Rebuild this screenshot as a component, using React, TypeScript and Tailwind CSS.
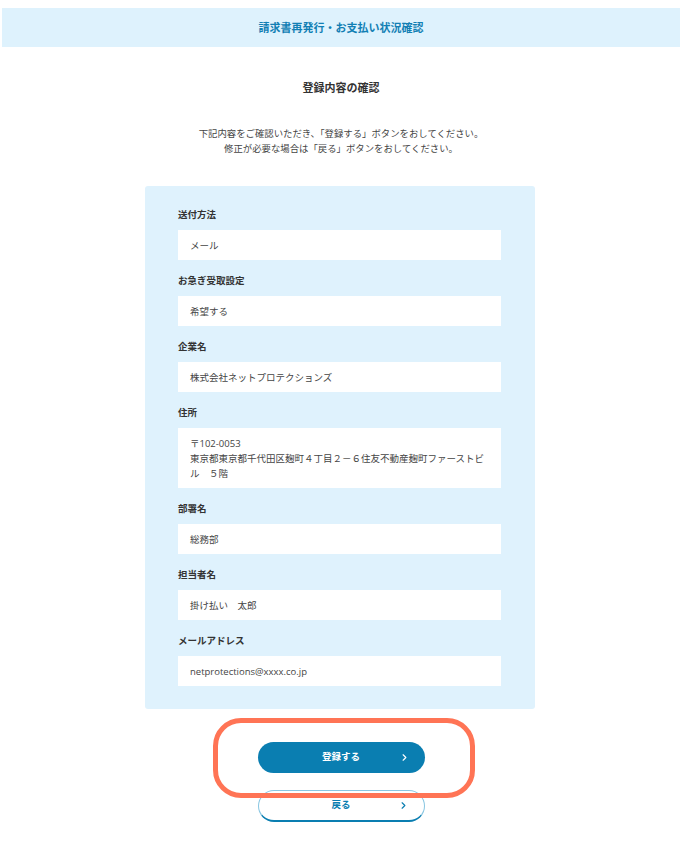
import { ChevronRight } from 'lucide-react';

const fields: { label: string; value: string[] }[] = [
  { label: '送付方法', value: ['メール'] },
  { label: 'お急ぎ受取設定', value: ['希望する'] },
  { label: '企業名', value: ['株式会社ネットプロテクションズ'] },
  {
    label: '住所',
    value: ['〒102-0053', '東京都東京都千代田区麹町４丁目２－６住友不動産麹町ファーストビル　５階'],
  },
  { label: '部署名', value: ['総務部'] },
  { label: '担当者名', value: ['掛け払い　太郎'] },
  { label: 'メールアドレス', value: ['netprotections@xxxx.co.jp'] },
];

const font = {
  fontFamily: '"Open Sans", "Noto Sans CJK JP", sans-serif',
};

export default function App() {
  return (
    <div className="min-h-[851px] w-full bg-white pt-[8px] text-[#333]" style={font}>
      <header className="mx-[2px] flex h-[39px] items-center justify-center bg-[#def2fd]">
        <h1 className="text-[11px] font-bold leading-none text-[#127fb4]">
          請求書再発行・お支払い状況確認
        </h1>
      </header>

      <main className="flex flex-col items-center">
        <h2 className="mt-[33px] text-[11px] font-bold leading-[16px] text-[#333]">
          登録内容の確認
        </h2>
        <p className="mt-[30px] text-center text-[9.4px] leading-[15px] text-[#444]">
          下記内容をご確認いただき、「登録する」ボタンをおしてください。
          <br />
          修正が必要な場合は「戻る」ボタンをおしてください。
        </p>

        <section className="mr-[2px] mt-[30px] flex w-[390px] flex-col gap-[15px] rounded-[3px] bg-[#dff2fd] pb-[23px] pl-[33px] pr-[34px] pt-[23px]">
          {fields.map((f) => (
            <div key={f.label} className="flex flex-col gap-[9px]">
              <div className="text-[9.5px] font-bold leading-[12px] text-[#333]">{f.label}</div>
              <div className="bg-white px-[12px] py-[7.5px] text-[9.5px] leading-[15px] text-[#444]">
                {f.value.map((line) => (
                  <div key={line}>{line}</div>
                ))}
              </div>
            </div>
          ))}
        </section>

        <div className="relative mt-[33px] flex flex-col items-center gap-[17px] pb-[29px]">
          <button className="relative flex h-[31px] w-[167px] items-center justify-center rounded-full bg-[#0a7eb1] text-[9.5px] font-bold text-white">
            登録する
            <ChevronRight className="absolute right-[15px] h-[11px] w-[11px]" strokeWidth={2.5} />
          </button>
          <button className="relative flex h-[32px] w-[167px] items-center justify-center rounded-full border border-b-[2px] border-[#8ac7e2] border-b-[#0a7eb1] bg-white text-[9.5px] font-bold text-[#0a7eb1]">
            戻る
            <ChevronRight className="absolute right-[15px] h-[11px] w-[11px]" strokeWidth={2.5} />
          </button>
          <div className="pointer-events-none absolute left-[-45px] top-[-24px] h-[80px] w-[262px] rounded-[28px] border-[5px] border-[#ff7455]" />
        </div>
      </main>
    </div>
  );
}
